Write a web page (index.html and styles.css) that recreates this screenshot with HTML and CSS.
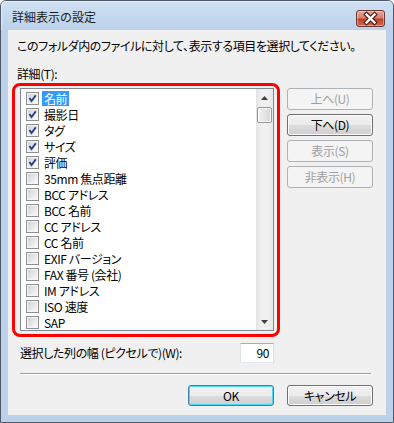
FILE: index.html
```html
<!DOCTYPE html>
<html lang="ja">
<head>
<meta charset="utf-8">
<title>詳細表示の設定</title>
<link rel="stylesheet" href="styles.css">
</head>
<body>
<div class="window">
  <div class="titlebar">
    <span class="title">詳細表示の設定</span>
    <div class="close">
      <svg width="29" height="17" viewBox="0 0 29 17">
        <path d="M10.5 4.5 L18.5 12.5 M18.5 4.5 L10.5 12.5" stroke="#4a1f1a" stroke-width="4.6" stroke-linecap="square" fill="none"/>
        <path d="M10.5 4.5 L18.5 12.5 M18.5 4.5 L10.5 12.5" stroke="#ffffff" stroke-width="2.4" stroke-linecap="square" fill="none"/>
      </svg>
    </div>
  </div>
  <div class="client">
    <p class="intro">このフォルダ内のファイルに対して、表示する項目を選択してください。</p>
    <p class="label">詳細(T):</p>
    <div class="main">
      <div class="highlight">
        <div class="listbox">
          <ul class="items">
            <li class="item"><span class="cb checked"><svg width="11" height="11" viewBox="0 0 11 11"><path d="M2.5 5 L4.5 8 L8.8 2.2" stroke="#2c3f86" stroke-width="1.9" fill="none"/></svg></span><span class="text selected">名前</span></li>
            <li class="item"><span class="cb checked"><svg width="11" height="11" viewBox="0 0 11 11"><path d="M2.5 5 L4.5 8 L8.8 2.2" stroke="#2c3f86" stroke-width="1.9" fill="none"/></svg></span><span class="text">撮影日</span></li>
            <li class="item"><span class="cb checked"><svg width="11" height="11" viewBox="0 0 11 11"><path d="M2.5 5 L4.5 8 L8.8 2.2" stroke="#2c3f86" stroke-width="1.9" fill="none"/></svg></span><span class="text">タグ</span></li>
            <li class="item"><span class="cb checked"><svg width="11" height="11" viewBox="0 0 11 11"><path d="M2.5 5 L4.5 8 L8.8 2.2" stroke="#2c3f86" stroke-width="1.9" fill="none"/></svg></span><span class="text">サイズ</span></li>
            <li class="item"><span class="cb checked"><svg width="11" height="11" viewBox="0 0 11 11"><path d="M2.5 5 L4.5 8 L8.8 2.2" stroke="#2c3f86" stroke-width="1.9" fill="none"/></svg></span><span class="text">評価</span></li>
            <li class="item"><span class="cb"></span><span class="text">35mm 焦点距離</span></li>
            <li class="item"><span class="cb"></span><span class="text">BCC アドレス</span></li>
            <li class="item"><span class="cb"></span><span class="text">BCC 名前</span></li>
            <li class="item"><span class="cb"></span><span class="text">CC アドレス</span></li>
            <li class="item"><span class="cb"></span><span class="text">CC 名前</span></li>
            <li class="item"><span class="cb"></span><span class="text">EXIF バージョン</span></li>
            <li class="item"><span class="cb"></span><span class="text">FAX 番号 (会社)</span></li>
            <li class="item"><span class="cb"></span><span class="text">IM アドレス</span></li>
            <li class="item"><span class="cb"></span><span class="text">ISO 速度</span></li>
            <li class="item"><span class="cb"></span><span class="text">SAP</span></li>
          </ul>
          <div class="scrollbar">
            <div class="sb-btn"><svg width="7" height="4" viewBox="0 0 7 4"><path d="M0 4 L3.5 0 L7 4 Z" fill="#404040"/></svg></div>
            <div class="thumb"></div>
            <div class="track"></div>
            <div class="sb-btn"><svg width="7" height="4" viewBox="0 0 7 4"><path d="M0 0 L7 0 L3.5 4 Z" fill="#404040"/></svg></div>
          </div>
        </div>
      </div>
      <div class="side-buttons">
        <div class="btn disabled">上へ(U)</div>
        <div class="btn">下へ(D)</div>
        <div class="btn disabled">表示(S)</div>
        <div class="btn disabled">非表示(H)</div>
      </div>
    </div>
    <div class="width-row">
      <span class="width-label">選択した列の幅 (ピクセルで)(W):</span>
      <div class="num-input">90</div>
    </div>
    <div class="sep"></div>
    <div class="footer">
      <div class="btn default">OK</div>
      <div class="btn">キャンセル</div>
    </div>
  </div>
</div>
</body>
</html>
```

FILE: styles.css
```css
* { box-sizing: border-box; }
html, body {
  margin: 0;
  padding: 0;
  background: #ffffff;
}
body {
  font-family: "Noto Sans CJK JP", "Noto Sans", sans-serif;
  font-size: 12px;
  font-feature-settings: "palt";
  letter-spacing: -0.4px;
  color: #000;
}
.window {
  width: 394px;
  height: 423px;
  border: 1px solid #4f5a68;
  border-radius: 6px 6px 0 0;
  background: #bcd2ea;
  display: flex;
  flex-direction: column;
  overflow: hidden;
}
.titlebar {
  height: 29px;
  flex: none;
  display: flex;
  align-items: flex-start;
  justify-content: space-between;
  background: linear-gradient(#cfe0f2, #bcd2ea);
  box-shadow: inset 1px 1px 0 #e4eef9;
  border-radius: 5px 5px 0 0;
}
.title {
  padding: 8px 0 0 11px;
  line-height: 16px;
  letter-spacing: 0;
  color: #1a1a1a;
  font-feature-settings: normal;
}
.close {
  margin: 9px 8px 0 0;
  width: 29px;
  height: 17px;
  border: 1px solid #6b3a36;
  border-radius: 3px;
  background: linear-gradient(#e8a99d 0%, #d77f6e 45%, #c2412a 55%, #cf6a4f 100%);
  box-shadow: inset 0 0 0 1px rgba(255, 220, 210, 0.45);
  display: flex;
  align-items: center;
  justify-content: center;
}
.close svg { display: block; margin: -1px; }
.client {
  flex: none;
  margin: 0 7px;
  height: 385px;
  background: #f0f0f0;
  padding-top: 8px;
}
.intro, .label {
  margin: 0 0 0 9px;
  line-height: 16px;
  white-space: nowrap;
}
.label { margin-top: 12px; }
.main {
  display: flex;
  align-items: flex-start;
  margin-top: 1px;
}
.highlight {
  margin-left: 4px;
  width: 268px;
  height: 254px;
  border: 3px solid #ff0000;
  border-radius: 8px;
  padding: 2px 3px 3px 5px;
}
.listbox {
  width: 254px;
  height: 243px;
  border: 1px solid #828790;
  background: #fff;
  display: flex;
}
.items {
  list-style: none;
  margin: 0;
  padding: 1px 0 0 5px;
  flex: 1;
}
.item {
  height: 16px;
  display: flex;
  align-items: center;
  white-space: nowrap;
}
.cb {
  width: 13px;
  height: 13px;
  flex: none;
  border: 1px solid #8e8f8f;
  background: #f6f6f6;
  box-shadow: inset 0 0 0 1px #f4f4f4;
  position: relative;
  background-image: linear-gradient(135deg, #cfd1d4 0%, #e6e7e8 50%, #fbfbfb 100%);
  background-size: 9px 9px;
  background-position: 1px 1px;
  background-repeat: no-repeat;
}
.cb svg {
  display: block;
  position: absolute;
  left: 0;
  top: 0;
}
.text {
  margin-left: 3px;
  padding: 0 2px;
  line-height: 15px;
}
.text.selected {
  background: #3399ff;
  color: #fff;
}
.scrollbar {
  width: 17px;
  flex: none;
  display: flex;
  flex-direction: column;
  background: linear-gradient(90deg, #e3e3e3, #f0f0f0 30%, #f0f0f0 70%, #e8e8e8);
}
.sb-btn {
  height: 17px;
  display: flex;
  align-items: center;
  justify-content: center;
}
.sb-btn svg { display: block; }
.thumb {
  margin: 1px 1px 0;
  height: 16px;
  border: 1px solid #979797;
  border-radius: 2px;
  background: linear-gradient(90deg, #f2f2f2, #e6e6e6 50%, #d6d6d6);
  box-shadow: inset 0 0 0 1px #fafafa;
}
.track { flex: 1; }
.side-buttons {
  margin: 5px 0 0 7px;
  display: flex;
  flex-direction: column;
  gap: 4px;
}
.btn {
  width: 86px;
  height: 22px;
  border: 1px solid #707070;
  border-radius: 3px;
  background: linear-gradient(#f2f2f2 0%, #ebebeb 50%, #dddddd 51%, #cfcfcf 100%);
  box-shadow: inset 0 0 0 1px #fcfcfc;
  display: flex;
  align-items: center;
  justify-content: center;
  line-height: 16px;
  white-space: nowrap;
}
.btn.disabled {
  border-color: #adb2b5;
  background: #f4f4f4;
  box-shadow: none;
  color: #a0a0a0;
}
.btn.default {
  border-color: #3c7fb1;
  box-shadow: inset 0 0 0 1px #48d8fb;
}
.width-row {
  margin: 6px 0 0 12px;
  width: 254px;
  height: 20px;
  display: flex;
  align-items: center;
  justify-content: space-between;
}
.width-label { line-height: 16px; white-space: nowrap; }
.num-input {
  width: 34px;
  height: 20px;
  border: 1px solid #abadb3;
  border-left-color: #e2e3ea;
  border-right-color: #dbdfe6;
  border-bottom-color: #e3e9ef;
  background: #fff;
  text-align: right;
  padding-right: 4px;
  line-height: 18px;
}
.sep {
  margin: 10px 0 0 12px;
  width: 351px;
  height: 2px;
  border-top: 1px solid #a0a0a0;
  border-bottom: 1px solid #ffffff;
}
.footer {
  margin: 10px 13px 0 0;
  display: flex;
  justify-content: flex-end;
  gap: 13px;
}
.footer .btn { height: 21px; }
```
